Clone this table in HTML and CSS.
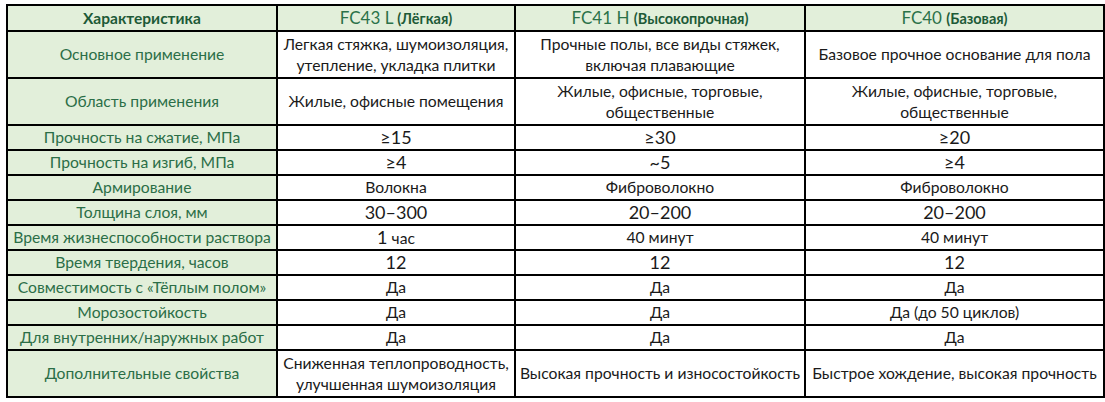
FILE: index.html
```html
<!DOCTYPE html>
<html lang="ru">
<head>
<meta charset="utf-8">
<link rel="stylesheet" href="styles.css">
</head>
<body>
<table class="spec">
  <colgroup>
    <col class="c1"><col class="c2"><col class="c3"><col class="c4">
  </colgroup>
  <thead>
    <tr class="head">
      <th class="lbl">Характеристика</th>
      <th>FC43 L <b>(Лёгкая)</b></th>
      <th>FC41 H <b>(Высокопрочная)</b></th>
      <th>FC40 <b>(Базовая)</b></th>
    </tr>
  </thead>
  <tbody>
    <tr class="dbl">
      <td class="lbl">Основное применение</td>
      <td>Легкая стяжка, шумоизоляция,<br>утепление, укладка плитки</td>
      <td>Прочные полы, все виды стяжек,<br>включая плавающие</td>
      <td>Базовое прочное основание для пола</td>
    </tr>
    <tr class="dbl">
      <td class="lbl">Область применения</td>
      <td>Жилые, офисные помещения</td>
      <td>Жилые, офисные, торговые,<br>общественные</td>
      <td>Жилые, офисные, торговые,<br>общественные</td>
    </tr>
    <tr>
      <td class="lbl">Прочность на сжатие, МПа</td>
      <td class="num">≥15</td><td class="num">≥30</td><td class="num">≥20</td>
    </tr>
    <tr>
      <td class="lbl">Прочность на изгиб, МПа</td>
      <td class="num">≥4</td><td class="num">~5</td><td class="num">≥4</td>
    </tr>
    <tr>
      <td class="lbl">Армирование</td>
      <td>Волокна</td><td>Фиброволокно</td><td>Фиброволокно</td>
    </tr>
    <tr>
      <td class="lbl">Толщина слоя, мм</td>
      <td class="num">30–300</td><td class="num">20–200</td><td class="num">20–200</td>
    </tr>
    <tr>
      <td class="lbl">Время жизнеспособности раствора</td>
      <td><span class="big">1</span> час</td><td>40 минут</td><td>40 минут</td>
    </tr>
    <tr>
      <td class="lbl">Время твердения, часов</td>
      <td class="num">12</td><td class="num">12</td><td class="num">12</td>
    </tr>
    <tr>
      <td class="lbl">Совместимость с «Тёплым полом»</td>
      <td>Да</td><td>Да</td><td>Да</td>
    </tr>
    <tr>
      <td class="lbl">Морозостойкость</td>
      <td>Да</td><td>Да</td><td>Да (до 50 циклов)</td>
    </tr>
    <tr>
      <td class="lbl">Для внутренних/наружных работ</td>
      <td>Да</td><td>Да</td><td>Да</td>
    </tr>
    <tr class="dbl">
      <td class="lbl">Дополнительные свойства</td>
      <td>Сниженная теплопроводность,<br>улучшенная шумоизоляция</td>
      <td>Высокая прочность и износостойкость</td>
      <td>Быстрое хождение, высокая прочность</td>
    </tr>
  </tbody>
</table>
</body>
</html>
```

FILE: styles.css
```css
html, body {
  margin: 0;
  padding: 0;
  background: #ffffff;
}
body {
  padding: 4px 0 0 6px;
  font-family: Lato, "Open Sans", sans-serif;
  font-size: 15.7px;
  color: #1a1a1a;
}
.spec {
  border-collapse: collapse;
  table-layout: fixed;
  width: 1097px;
}
.c1 { width: 270px; }
.c2 { width: 238px; }
.c3 { width: 290px; }
.c4 { width: 299px; }
.spec th,
.spec td {
  border: 2px solid #000;
  text-align: center;
  vertical-align: middle;
  padding: 0;
  height: 23px;
  line-height: 21px;
  white-space: nowrap;
}
.spec tr.dbl td { height: 45px; }
.spec tr.head th {
  height: 24px;
  background: #e2efda;
  color: #2b7249;
  font-weight: normal;
  font-size: 17px;
}
.spec tr.head th b {
  font-weight: bold;
  font-size: 14.5px;
  color: #1d5a37;
}
.spec tr.head th.lbl {
  font-weight: bold;
  font-size: 15.5px;
  color: #1d5a37;
}
.spec td.lbl {
  background: #e2efda;
  color: #2b6e47;
}
.spec td.num { font-size: 18px; }
.big { font-size: 18px; }
```
